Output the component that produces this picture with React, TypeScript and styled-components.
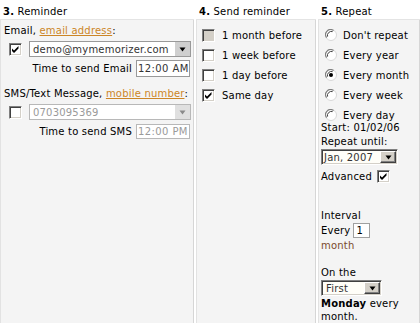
import React from "react";
import styled, { createGlobalStyle } from "styled-components";

const Global = createGlobalStyle`
  html, body { margin: 0; padding: 0; background: #ffffff; }
  body { font-family: "DejaVu Sans", Verdana, sans-serif; font-size: 10px; letter-spacing: 0.2px; color: #000; }
`;

const Table = styled.div`
  display: grid;
  grid-template-columns: 194px 120px 1fr;
  column-gap: 2px;
  height: 323px;
  overflow: hidden;
  background: #ffffff;
`;

const Column = styled.div`
  display: flex;
  flex-direction: column;
  min-height: 0;
`;

const Header = styled.div`
  height: 20px;
  box-sizing: border-box;
  padding: 5px 0 0 3px;
  line-height: 14px;
  background: #ffffff;
  border-bottom: 1px solid #e4e4e4;
  white-space: nowrap;
  b { font-weight: bold; }
`;

const Body = styled.div<{ $pl: number; $pt: number }>`
  flex: 1;
  background: #f4f4f4;
  border-left: 1px solid #e2e2e2;
  border-right: 1px solid #d6d6d6;
  padding: ${(p) => p.$pt}px 0 0 ${(p) => p.$pl}px;
  display: flex;
  flex-direction: column;
  white-space: nowrap;
`;

const Line = styled.div<{ $mt?: number; $lh?: number }>`
  margin-top: ${(p) => p.$mt ?? 0}px;
  line-height: ${(p) => p.$lh ?? 14}px;
`;

const Link = styled.a`
  color: #cc8526;
  text-decoration: underline;
`;

const Brown = styled.div<{ $mt?: number }>`
  color: #7a4a2c;
  line-height: 15px;
  margin-top: ${(p) => p.$mt ?? 0}px;
`;

const Row = styled.div<{ $mt?: number; $pl?: number; $gap?: number; $h?: number }>`
  display: flex;
  align-items: center;
  margin-top: ${(p) => p.$mt ?? 0}px;
  padding-left: ${(p) => p.$pl ?? 0}px;
  gap: ${(p) => p.$gap ?? 0}px;
  ${(p) => (p.$h ? `height: ${p.$h}px;` : "")}
`;

const TimeRow = styled.div<{ $mt: number }>`
  display: flex;
  align-items: center;
  justify-content: flex-end;
  gap: 4px;
  width: 186px;
  margin-top: ${(p) => p.$mt}px;
`;

const Box = styled.span<{ $disabled?: boolean }>`
  width: 13px;
  height: 13px;
  box-sizing: border-box;
  flex: none;
  display: inline-flex;
  align-items: center;
  justify-content: center;
  background: ${(p) => (p.$disabled ? "#d4d0c8" : "#ffffff")};
  border-top: 1px solid #808080;
  border-left: 1px solid #808080;
  border-right: 1px solid #ffffff;
  border-bottom: 1px solid #ffffff;
  box-shadow: inset 1px 1px 0 #404040, inset -1px -1px 0 #d4d0c8;
`;

const Check: React.FC<{ checked?: boolean; disabled?: boolean }> = ({ checked, disabled }) => (
  <Box $disabled={disabled}>
    {checked && (
      <svg width="9" height="9" viewBox="0 0 9 9">
        <path d="M1 3.5 L3 5.5 L7.5 1 L7.5 3.5 L3 8 L1 6 Z" fill="#000" />
      </svg>
    )}
  </Box>
);

const Radio: React.FC<{ checked?: boolean }> = ({ checked }) => (
  <svg width="12" height="12" viewBox="0 0 12 12" style={{ flex: "none" }}>
    <circle cx="6" cy="6" r="5.5" fill="#ffffff" stroke="#d8d8d8" strokeWidth="1" />
    <path d="M1.6 8.6 A5 5 0 0 1 8.6 1.6" stroke="#808080" strokeWidth="1.2" fill="none" />
    <path d="M2.6 7.6 A4 4 0 0 1 7.6 2.6" stroke="#404040" strokeWidth="1" fill="none" />
    {checked && <circle cx="6" cy="6" r="2" fill="#000" />}
  </svg>
);

const Select = styled.div<{ $w: number; $h: number; $disabled?: boolean; $inset?: boolean }>`
  width: ${(p) => p.$w}px;
  height: ${(p) => p.$h}px;
  box-sizing: border-box;
  display: flex;
  align-items: stretch;
  background: ${(p) => (p.$inset ? "#fffef8" : "#ffffff")};
  color: ${(p) => (p.$disabled ? "#9a9a9a" : "#333333")};
  ${(p) =>
    p.$inset
      ? "border-top: 1px solid #808080; border-left: 1px solid #808080; border-right: 1px solid #fff; border-bottom: 1px solid #fff; box-shadow: inset 1px 1px 0 #404040, inset -1px -1px 0 #d4d0c8;"
      : `border: 1px solid ${p.$disabled ? "#b8b8b8" : "#999999"};`}
`;

const SelectText = styled.span<{ $pl: number }>`
  flex: 1;
  padding-left: ${(p) => p.$pl}px;
  display: flex;
  align-items: center;
  overflow: hidden;
`;

const SelectBtn = styled.span<{ $w: number; $disabled?: boolean; $raised?: boolean }>`
  width: ${(p) => p.$w}px;
  flex: none;
  display: flex;
  align-items: center;
  justify-content: center;
  background: ${(p) => (p.$disabled ? "#e0e0e0" : "#cfcfcf")};
  ${(p) =>
    p.$raised
      ? "box-sizing: border-box; border-top: 1px solid #fff; border-left: 1px solid #fff; border-right: 1px solid #404040; border-bottom: 1px solid #404040; box-shadow: inset -1px -1px 0 #808080; background: #d4d0c8; margin: 1px 1px 1px 0;"
      : ""}
`;

const Tri: React.FC<{ color: string }> = ({ color }) => (
  <svg width="7" height="5" viewBox="0 0 7 5">
    <path d="M0.5 0.5 H6.5 L3.5 4.5 Z" fill={color} />
  </svg>
);

const TimeInput = styled.div<{ $h: number; $disabled?: boolean }>`
  width: 54px;
  height: ${(p) => p.$h}px;
  box-sizing: border-box;
  border: 1px solid ${(p) => (p.$disabled ? "#b8b8b8" : "#999999")};
  background: #ffffff;
  color: ${(p) => (p.$disabled ? "#9a9a9a" : "#333333")};
  letter-spacing: 0.4px;
  display: flex;
  align-items: center;
  padding-left: 1px;
  overflow: hidden;
`;

const SmallInput = styled.div`
  width: 17px;
  height: 15px;
  box-sizing: border-box;
  border: 1px solid #a0a0a0;
  background: #ffffff;
  display: flex;
  align-items: center;
  padding-left: 2px;
`;

const OptRow = styled.div<{ $gap: number; $h: number; $pl?: number }>`
  display: flex;
  align-items: center;
  gap: ${(p) => p.$gap}px;
  height: ${(p) => p.$h}px;
  padding-left: ${(p) => p.$pl ?? 0}px;
`;

const App: React.FC = () => (
  <>
    <Global />
    <Table>
      <Column>
        <Header>
          <b>3.</b> Reminder
        </Header>
        <Body $pl={3} $pt={4}>
          <Line>
            Email, <Link>email address</Link>:
          </Line>
          <Row $mt={3} $pl={5} $gap={7}>
            <Check checked />
            <Select $w={162} $h={16}>
              <SelectText $pl={3}>demo@mymemorizer.com</SelectText>
              <SelectBtn $w={15}>
                <Tri color="#000" />
              </SelectBtn>
            </Select>
          </Row>
          <TimeRow $mt={3}>
            Time to send Email
            <TimeInput $h={17}>12:00 AM</TimeInput>
          </TimeRow>
          <Line $mt={10}>
            SMS/Text Message, <Link>mobile number</Link>:
          </Line>
          <Row $mt={3} $pl={5} $gap={7}>
            <Check />
            <Select $w={162} $h={16} $disabled>
              <SelectText $pl={3}>0703095369</SelectText>
              <SelectBtn $w={15} $disabled>
                <Tri color="#8a8a8a" />
              </SelectBtn>
            </Select>
          </Row>
          <TimeRow $mt={4}>
            Time to send SMS
            <TimeInput $h={15} $disabled>
              12:00 PM
            </TimeInput>
          </TimeRow>
        </Body>
      </Column>
      <Column>
        <Header>
          <b>4.</b> Send reminder
        </Header>
        <Body $pl={5} $pt={5}>
          <OptRow $gap={7} $h={20}>
            <Check disabled />1 month before
          </OptRow>
          <OptRow $gap={7} $h={20}>
            <Check />1 week before
          </OptRow>
          <OptRow $gap={7} $h={20}>
            <Check />1 day before
          </OptRow>
          <OptRow $gap={7} $h={20}>
            <Check checked />
            Same day
          </OptRow>
        </Body>
      </Column>
      <Column>
        <Header>
          <b>5.</b> Repeat
        </Header>
        <Body $pl={2} $pt={5}>
          {["Don't repeat", "Every year", "Every month", "Every week", "Every day"].map((t) => (
            <OptRow key={t} $gap={6} $h={20} $pl={4}>
              <Radio checked={t === "Every month"} />
              {t}
            </OptRow>
          ))}
          <Line $mt={-4} $lh={14}>
            Start: 01/02/06
          </Line>
          <Line $lh={14}>Repeat until:</Line>
          <Row>
            <Select $w={77} $h={16} $inset>
              <SelectText $pl={2}>Jan, 2007</SelectText>
              <SelectBtn $w={16} $raised>
                <Tri color="#000" />
              </SelectBtn>
            </Select>
          </Row>
          <Row $mt={5} $gap={5}>
            Advanced
            <Check checked />
          </Row>
          <Line $mt={26}>Interval</Line>
          <Row $gap={3}>
            Every
            <SmallInput>1</SmallInput>
          </Row>
          <Brown>month</Brown>
          <Line $mt={13}>On the</Line>
          <Row>
            <Select $w={61} $h={16} $inset>
              <SelectText $pl={4}>First</SelectText>
              <SelectBtn $w={16} $raised>
                <Tri color="#000" />
              </SelectBtn>
            </Select>
          </Row>
          <Line $mt={1} $lh={13}>
            <b>Monday</b> every
          </Line>
          <Line $lh={13}>month.</Line>
        </Body>
      </Column>
    </Table>
  </>
);

export default App;
